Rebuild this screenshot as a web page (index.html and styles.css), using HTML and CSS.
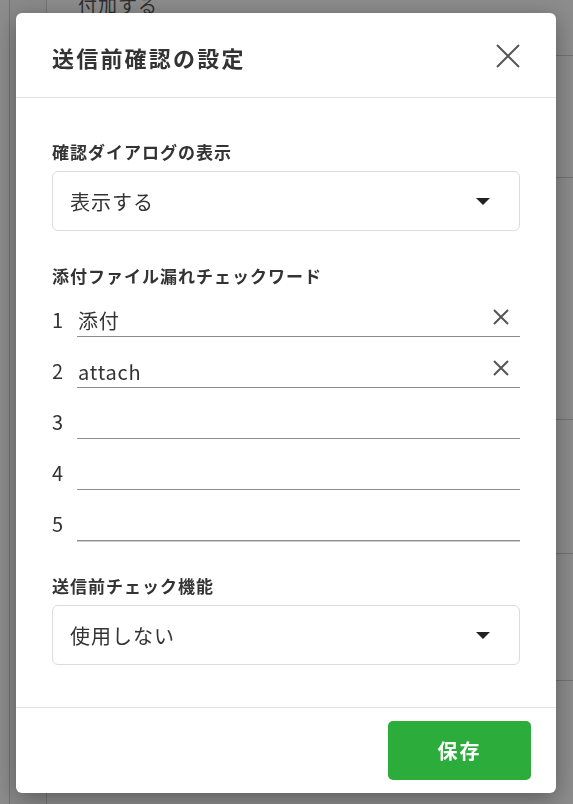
FILE: index.html
```html
<!DOCTYPE html>
<html lang="ja">
<head>
<meta charset="utf-8">
<title>送信前確認の設定</title>
<link rel="stylesheet" href="styles.css">
</head>
<body>
<div class="page">
  <div class="rail"></div>
  <div class="nav"></div>
  <div class="main">
    <div class="bg-row r1"><span class="bg-text">付加する</span></div>
    <div class="bg-row r2"></div>
    <div class="bg-row r3"></div>
    <div class="bg-row r4"></div>
    <div class="bg-row r5"></div>
  </div>
</div>

<div class="overlay">
  <div class="modal">
    <div class="modal-header">
      <h1 class="modal-title">送信前確認の設定</h1>
      <button class="close-btn" aria-label="閉じる">
        <svg width="26" height="26" viewBox="0 0 26 26"><path d="M2 2 L24 24 M24 2 L2 24" stroke="#555" stroke-width="2" fill="none"/></svg>
      </button>
    </div>
    <div class="modal-body">
      <div class="field-label first">確認ダイアログの表示</div>
      <div class="select">
        <span class="select-text">表示する</span>
        <span class="caret"></span>
      </div>

      <div class="field-label">添付ファイル漏れチェックワード</div>
      <div class="word-list">
        <div class="word-row">
          <span class="num">1</span>
          <div class="word-input"><span class="word-text">添付</span>
            <svg class="clear" width="18" height="18" viewBox="0 0 18 18"><path d="M2 2 L16 16 M16 2 L2 16" stroke="#555" stroke-width="2" fill="none"/></svg>
          </div>
        </div>
        <div class="word-row">
          <span class="num">2</span>
          <div class="word-input"><span class="word-text">attach</span>
            <svg class="clear" width="18" height="18" viewBox="0 0 18 18"><path d="M2 2 L16 16 M16 2 L2 16" stroke="#555" stroke-width="2" fill="none"/></svg>
          </div>
        </div>
        <div class="word-row">
          <span class="num">3</span>
          <div class="word-input"></div>
        </div>
        <div class="word-row">
          <span class="num">4</span>
          <div class="word-input"></div>
        </div>
        <div class="word-row">
          <span class="num">5</span>
          <div class="word-input last"></div>
        </div>
      </div>

      <div class="field-label">送信前チェック機能</div>
      <div class="select">
        <span class="select-text">使用しない</span>
        <span class="caret"></span>
      </div>
    </div>
    <div class="modal-footer">
      <button class="save-btn">保存</button>
    </div>
  </div>
</div>
</body>
</html>
```

FILE: styles.css
```css
* { box-sizing: border-box; }
html, body {
  margin: 0;
  padding: 0;
  width: 573px;
  height: 804px;
  overflow: hidden;
  font-family: "Noto Sans CJK JP", "Noto Sans", sans-serif;
  color: #333;
}

/* background page */
.page {
  display: flex;
  height: 804px;
  background: #fff;
}
.rail {
  width: 10px;
  background: #fff;
  border-right: 1px solid #cfcfcf;
}
.nav {
  width: 37px;
  background: #fafafa;
  border-right: 1px solid #d6d6d6;
}
.main {
  flex: 1;
  display: flex;
  flex-direction: column;
}
.bg-row {
  border-bottom: 1px solid #d0d0d0;
}
.r1 { height: 56px; padding-left: 31px; }
.r2 { height: 122px; }
.r3 { height: 242px; }
.r4 { height: 134px; }
.r5 { height: 127px; }
.bg-text {
  display: block;
  margin-top: -7px;
  font-size: 19px;
  line-height: 24px;
  letter-spacing: 1px;
  color: #555;
}

/* overlay + modal */
.overlay {
  position: fixed;
  inset: 0;
  background: rgba(0, 0, 0, 0.45);
  display: flex;
  align-items: flex-start;
  padding: 13px 0 0 16px;
}
.modal {
  width: 540px;
  height: 780px;
  background: #fff;
  border-radius: 6px;
  box-shadow: 0 6px 24px rgba(0, 0, 0, 0.35);
  display: flex;
  flex-direction: column;
}
.modal-header {
  height: 85px;
  flex: none;
  display: flex;
  align-items: center;
  justify-content: space-between;
  padding: 4px 35px 0 36px;
  border-bottom: 1px solid #e2e2e2;
}
.modal-title {
  margin: 0;
  font-size: 22px;
  line-height: 30px;
  font-weight: 700;
  letter-spacing: 2.2px;
  color: #333;
}
.close-btn {
  border: 0;
  background: none;
  padding: 0;
  width: 26px;
  height: 26px;
  display: flex;
  margin-top: -2px;
}

.modal-body {
  flex: 1;
  padding: 42px 36px 0 36px;
  display: flex;
  flex-direction: column;
}
.field-label {
  font-size: 17px;
  line-height: 24px;
  font-weight: 700;
  letter-spacing: 1px;
  color: #333;
  margin-top: 33px;
  margin-bottom: 7px;
}
.field-label.first { margin-top: 0; }

.select {
  height: 60px;
  border: 1px solid #dcdcdc;
  border-radius: 6px;
  display: flex;
  align-items: center;
  justify-content: space-between;
  padding: 0 29px 0 17px;
}
.select-text {
  font-size: 20px;
  letter-spacing: 1px;
  color: #333;
}
.caret {
  width: 0;
  height: 0;
  border-left: 7px solid transparent;
  border-right: 7px solid transparent;
  border-top: 7px solid #222;
}

.word-list {
  display: flex;
  flex-direction: column;
  gap: 18px;
  margin-top: 9px;
}
.word-row {
  display: flex;
  align-items: flex-end;
}
.num {
  width: 25px;
  font-size: 20px;
  line-height: 32px;
  margin-bottom: 1px;
  color: #333;
}
.word-input {
  flex: 1;
  height: 33px;
  border-bottom: 1px solid #8c8c8c;
  display: flex;
  align-items: center;
  justify-content: space-between;
  padding: 0 10px 0 1px;
}
.word-input.last {
  box-shadow: 0 1px 0 #cfcfcf;
}
.word-text {
  font-size: 20px;
  letter-spacing: 0.8px;
  color: #333;
}
.clear { margin-top: -7px; }

.modal-footer {
  flex: none;
  height: 86px;
  border-top: 1px solid #e2e2e2;
  display: flex;
  justify-content: flex-end;
  align-items: flex-start;
  padding: 13px 25px 0 0;
}
.save-btn {
  width: 143px;
  height: 59px;
  border: 0;
  border-radius: 5px;
  background: #2cac3a;
  color: #fff;
  font-family: "Noto Sans CJK JP", sans-serif;
  font-size: 20px;
  font-weight: 700;
  letter-spacing: 2px;
}
```
